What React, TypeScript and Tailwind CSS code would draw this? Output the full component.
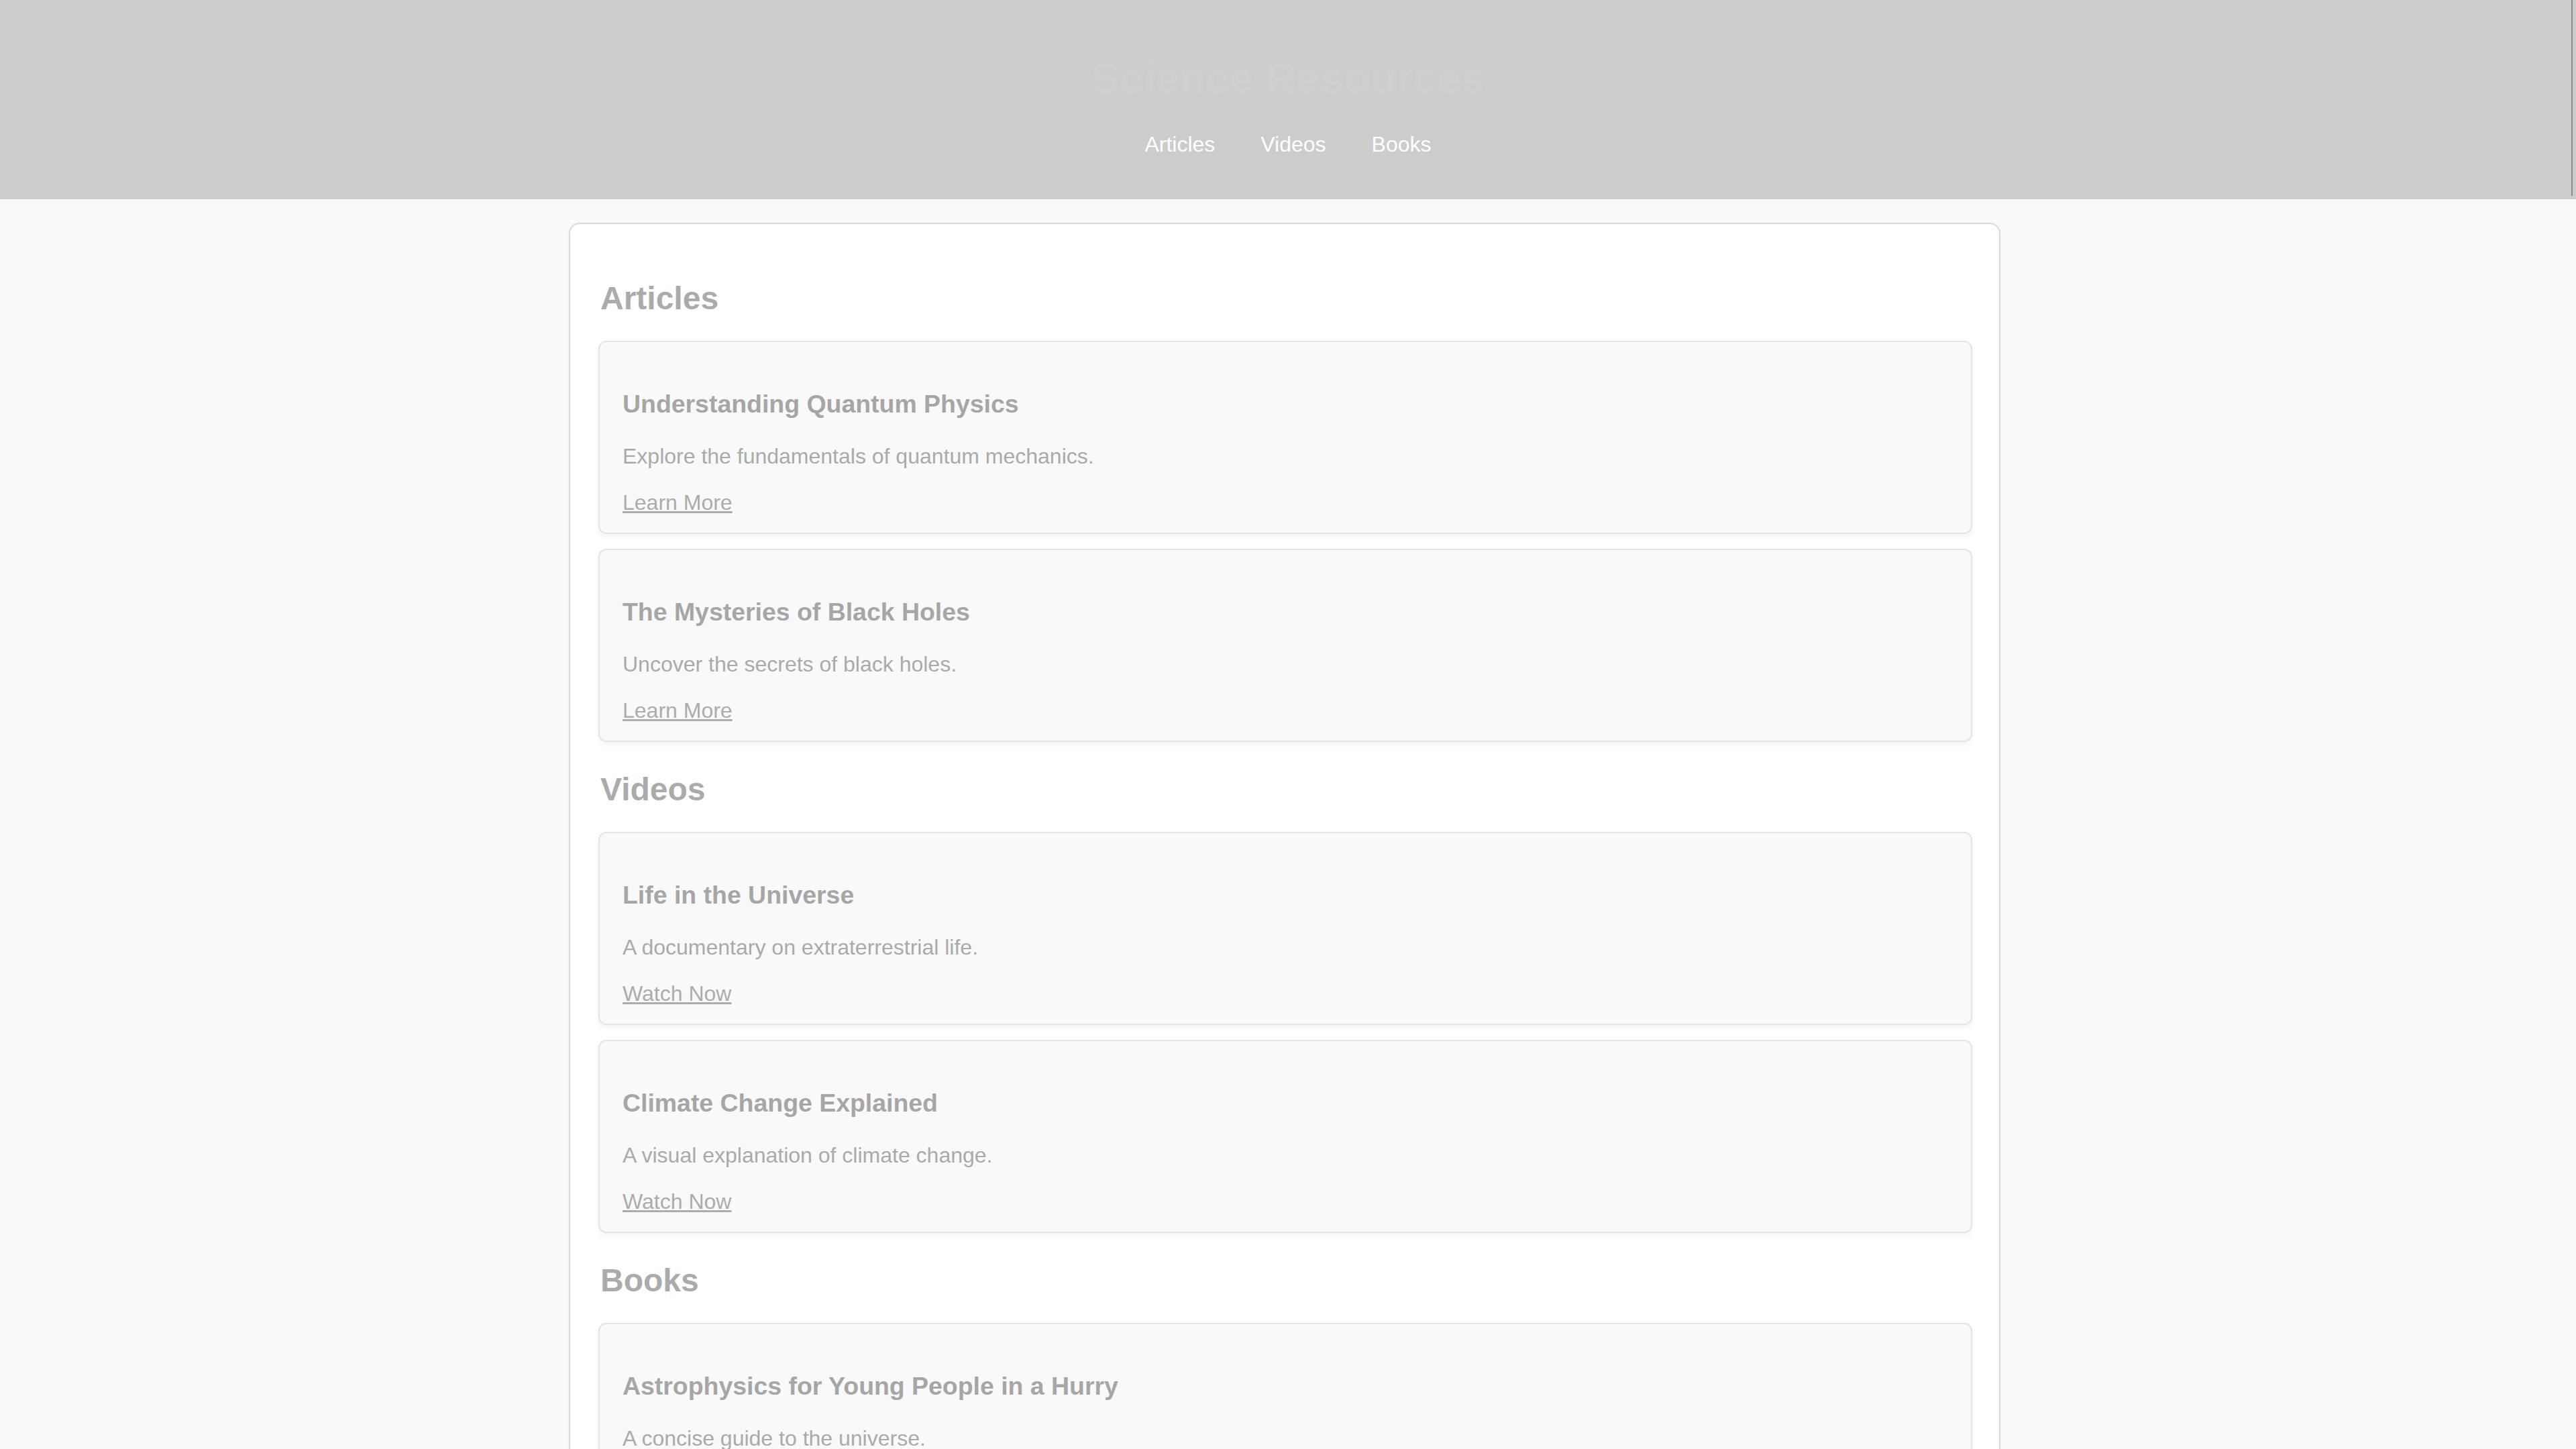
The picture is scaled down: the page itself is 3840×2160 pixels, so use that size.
import React from "react";

type Item = { title: string; desc: string; link: string };
type Section = { id: string; name: string; items: Item[] };

const sections: Section[] = [
  {
    id: "articles",
    name: "Articles",
    items: [
      { title: "Understanding Quantum Physics", desc: "Explore the fundamentals of quantum mechanics.", link: "Learn More" },
      { title: "The Mysteries of Black Holes", desc: "Uncover the secrets of black holes.", link: "Learn More" },
    ],
  },
  {
    id: "videos",
    name: "Videos",
    items: [
      { title: "Life in the Universe", desc: "A documentary on extraterrestrial life.", link: "Watch Now" },
      { title: "Climate Change Explained", desc: "A visual explanation of climate change.", link: "Watch Now" },
    ],
  },
  {
    id: "books",
    name: "Books",
    items: [
      { title: "Astrophysics for Young People in a Hurry", desc: "A concise guide to the universe.", link: "Read More" },
      { title: "The Gene: An Intimate History", desc: "The story of genetics and heredity.", link: "Read More" },
    ],
  },
];

function Card({ item }: { item: Item }) {
  return (
    <div className="flex flex-col rounded-[12px] border-2 border-[#e4e4e4] bg-[#f9f9f9] pl-[34px] pr-[32px] pt-[71px] pb-[21px] shadow-[0_4px_8px_rgba(0,0,0,0.05)]">
      <h3 className="m-0 text-[37.44px] font-bold leading-[43px] text-[#a6a6a6]">{item.title}</h3>
      <p className="m-0 mt-[38px] text-[32px] leading-[37px] text-[#aaaaaa]">{item.desc}</p>
      <div className="mt-[32px] leading-[37px]">
        <a href="#" className="text-[32px] text-[#acacac] underline">
          {item.link}
        </a>
      </div>
    </div>
  );
}

export default function App() {
  return (
    <div className="relative h-[2160px] overflow-hidden bg-[#fafafa] font-['Liberation_Sans',Arial,sans-serif]">
      <header className="flex h-[297px] flex-col items-center bg-[#cccccc] pt-[80px]">
        <h1 className="m-0 text-[64px] font-bold leading-[74px] text-[#cfcfcf]">Science Resources</h1>
        <nav className="mt-[43px] flex gap-[68px] text-[32px] leading-[37px] text-white">
          <a href="#articles">Articles</a>
          <a href="#videos">Videos</a>
          <a href="#books">Books</a>
        </nav>
      </header>
      <div className="absolute right-[5px] top-0 h-[292px] w-[2px] bg-[#8c8c8c]" />
      <div className="pr-[10px]">
        <main className="mx-auto mt-[35px] w-[2134px] rounded-[16px] border-2 border-[#dadada] bg-white pl-[42px] pr-[40px] pt-[40px] shadow-[0_2px_10px_rgba(0,0,0,0.04)]">
          {sections.map((s, i) => (
            <section key={s.id} id={s.id} className={i === 0 ? "mt-[43px]" : "mt-[43px]"}>
              <h2 className="m-0 pl-[3px] text-[48px] font-bold leading-[55px] text-[#ababab]">{s.name}</h2>
              <div className="mt-[36px] flex flex-col gap-[22px]">
                {s.items.map((it) => (
                  <Card key={it.title} item={it} />
                ))}
              </div>
            </section>
          ))}
          <div className="h-[40px]" />
        </main>
      </div>
    </div>
  );
}
